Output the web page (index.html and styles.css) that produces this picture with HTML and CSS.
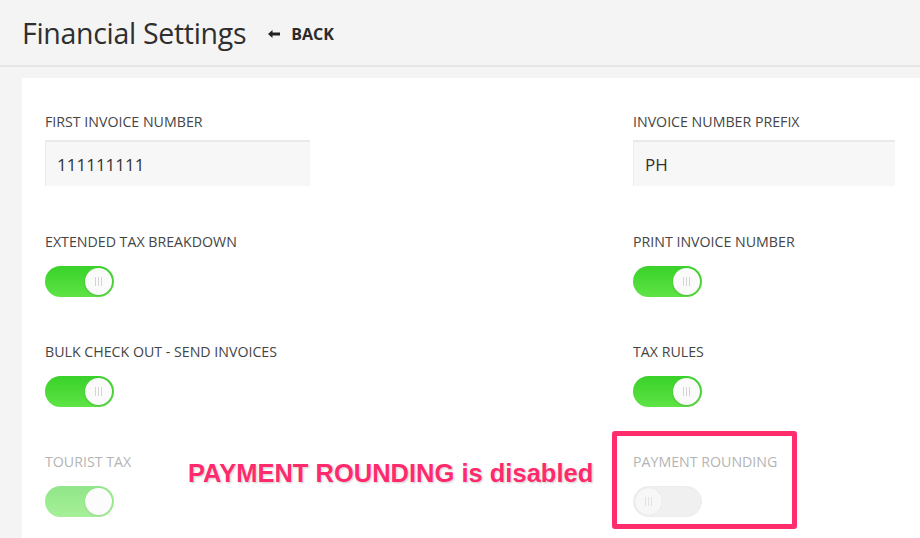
FILE: index.html
```html
<!DOCTYPE html>
<html>
<head>
<meta charset="utf-8">
<link rel="stylesheet" href="styles.css">
</head>
<body>
<header class="topbar">
  <h1 class="title">Financial Settings</h1>
  <a class="back"><svg class="back-icon" width="14" height="10" viewBox="0 0 14 10"><path d="M1 5 L5.5 1 L5.5 3.6 L13 3.6 L13 6.4 L5.5 6.4 L5.5 9 Z" fill="#222"/></svg>BACK</a>
</header>
<main class="wrap">
  <section class="card">
    <div class="cell cell-input">
      <label class="label">FIRST INVOICE NUMBER</label>
      <div class="input">111111111</div>
    </div>
    <div class="cell cell-input">
      <label class="label">INVOICE NUMBER PREFIX</label>
      <div class="input">PH</div>
    </div>
    <div class="cell">
      <label class="label">EXTENDED TAX BREAKDOWN</label>
      <span class="toggle on"><span class="knob"><i></i><i></i><i></i></span></span>
    </div>
    <div class="cell">
      <label class="label">PRINT INVOICE NUMBER</label>
      <span class="toggle on"><span class="knob"><i></i><i></i><i></i></span></span>
    </div>
    <div class="cell">
      <label class="label">BULK CHECK OUT - SEND INVOICES</label>
      <span class="toggle on"><span class="knob"><i></i><i></i><i></i></span></span>
    </div>
    <div class="cell">
      <label class="label">TAX RULES</label>
      <span class="toggle on"><span class="knob"><i></i><i></i><i></i></span></span>
    </div>
    <div class="cell cell-last">
      <label class="label disabled">TOURIST TAX</label>
      <span class="toggle on faded"><span class="knob"></span></span>
      <span class="note">PAYMENT ROUNDING is disabled</span>
    </div>
    <div class="cell cell-last">
      <label class="label disabled">PAYMENT ROUNDING</label>
      <span class="toggle off"><span class="knob"><i></i><i></i><i></i></span></span>
      <span class="highlight"></span>
    </div>
  </section>
</main>
</body>
</html>
```
FILE: styles.css
```css
* { box-sizing: border-box; }
html, body { margin: 0; padding: 0; }
body {
  width: 920px;
  height: 538px;
  overflow: hidden;
  background: #f4f4f4;
  font-family: "Open Sans", "Noto Sans", sans-serif;
  color: #3b3b3b;
}
.topbar {
  height: 67px;
  display: flex;
  align-items: center;
  padding-left: 22px;
  border-bottom: 2px solid #e6e6e6;
}
.title {
  margin: 0;
  font-weight: 400;
  font-size: 28.5px;
  color: #2f2f2f;
  letter-spacing: -0.3px;
}
.back {
  margin-left: 21px;
  display: flex;
  align-items: center;
  gap: 10px;
  font-weight: 700;
  font-size: 16px;
  color: #2b2b2b;
  margin-top: 2px;
}
.back-icon { display: block; }
.wrap {
  padding: 11px 0 0 22px;
}
.card {
  background: #fff;
  display: grid;
  grid-template-columns: 588px 1fr;
  padding: 34px 25px 0 23px;
  height: 460px;
}
.cell {
  position: relative;
  display: flex;
  flex-direction: column;
  align-items: flex-start;
  height: 110px;
}
.cell-input { height: 120px; }
.label {
  font-size: 14.2px;
  line-height: 20px;
  color: #454545;
  letter-spacing: 0;
}
.label.disabled { color: #b4b4b4; }
.input {
  margin-top: 8px;
  width: 265px;
  height: 46px;
  background: #f7f7f7;
  border-top: 2px solid #e9e9e9;
  border-left: 1px solid #ececec;
  padding: 0 0 0 11px;
  display: flex;
  align-items: center;
  font-size: 17px;
  color: #333;
}
.cell-input:nth-child(2) .input { width: 262px; }
.toggle {
  margin-top: 14px;
  width: 69px;
  height: 31px;
  border-radius: 16px;
  position: relative;
  display: block;
}
.toggle.on {
  background: linear-gradient(#39d12a, #5ee445);
}
.toggle.faded { opacity: 0.55; }
.toggle.off {
  background: #f0f0f0;
  border: 1px solid #ececec;
}
.knob {
  position: absolute;
  top: 2px;
  width: 27px;
  height: 27px;
  border-radius: 50%;
  background: #fbfbfb;
  box-shadow: 0 1px 2px rgba(0,0,0,0.18);
  display: flex;
  align-items: center;
  justify-content: center;
  gap: 2px;
}
.toggle.on .knob { right: 2px; }
.toggle.off .knob {
  left: 1px;
  top: 1px;
  background: #f7f7f7;
  box-shadow: 0 0 1px rgba(0,0,0,0.12);
}
.knob i {
  display: block;
  width: 1px;
  height: 9px;
  background: #d4d4d4;
}
.toggle.off .knob i { background: #e2e2e2; }
.note {
  position: absolute;
  left: 143px;
  top: 7px;
  font-family: "Liberation Sans", Arial, sans-serif;
  font-weight: 700;
  font-size: 25.5px;
  color: #ff2a6c;
  white-space: nowrap;
  text-shadow: 0 0 2px #fff, 1px 1px 2px rgba(0,0,0,0.25);
}
.highlight {
  position: absolute;
  left: -21px;
  top: -21px;
  width: 185px;
  height: 98px;
  border: 5px solid #ff2d6b;
  border-radius: 3px;
}
```
